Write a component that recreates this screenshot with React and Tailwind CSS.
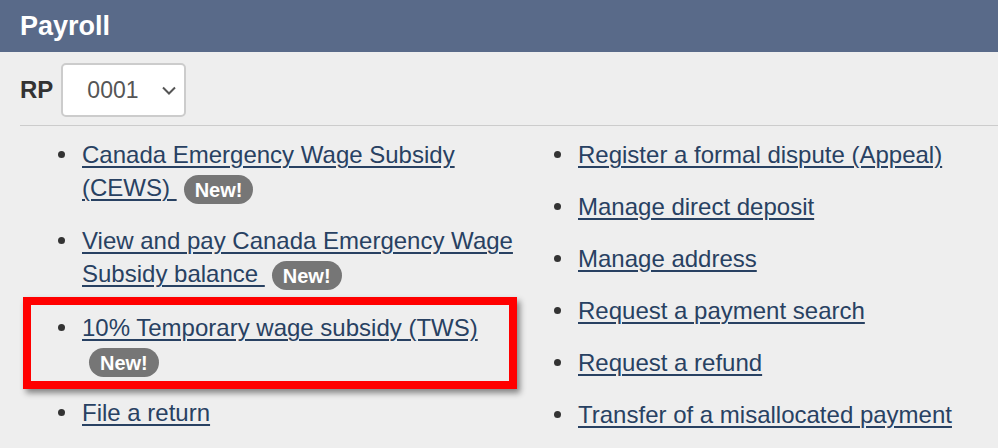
import React from "react";

function Badge({ first }) {
  return (
    <span
      className={`inline-flex h-[29px] items-center rounded-full bg-[#767676] px-[11px] align-middle text-[20px] font-bold leading-none text-white ${first ? "" : "ml-[7px]"}`}
    >
      New!
    </span>
  );
}

function Item({ children, className = "" }) {
  return (
    <li className={`flex ${className}`}>
      <span className="mt-[13px] mr-[17px] h-[7px] w-[7px] shrink-0 rounded-full bg-[#333]" />
      <div className="min-w-0 flex-1">{children}</div>
    </li>
  );
}

const L = ({ children }) => (
  <a href="#" className="text-[#284162] underline decoration-[1.5px] underline-offset-[3px]">
    {children}
  </a>
);

export default function App() {
  return (
    <div
      className="h-[448px] w-[998px] overflow-hidden bg-[#eeeeee] text-[#333]"
      style={{ fontFamily: '"Liberation Sans", Arial, sans-serif' }}
    >
      <div className="h-[52px] bg-[#596a89] px-5 pt-[6px]">
        <h1 className="text-[27px] font-bold leading-[40px] text-white">Payroll</h1>
      </div>
      <div className="pl-5">
        <div className="mt-[11px] flex items-center">
          <span className="text-[24px] font-bold leading-none">RP</span>
          <div className="ml-[8px] flex h-[54px] w-[125px] items-center rounded-[5px] border-2 border-[#cccccc] bg-white pl-[24px] pr-[6px]">
            <span className="flex-1 text-[23px] text-[#555]">0001</span>
            <svg width="14" height="9" viewBox="0 0 14 9" className="mr-[2px]">
              <path d="M1 1.5 L7 7.5 L13 1.5" fill="none" stroke="#555" strokeWidth="2" />
            </svg>
          </div>
        </div>
        <div className="mt-[8px] h-px bg-[#cccccc]" />
        <div className="mt-[12px] flex text-[24px] leading-[33px]">
          <ul className="w-[496px] shrink-0 pl-[38px]">
            <Item className="mb-[20px]">
              <L>Canada Emergency Wage Subsidy (CEWS) </L>
              <Badge />
            </Item>
            <Item className="mb-[21px]">
              <L>View and pay Canada Emergency Wage Subsidy balance </L>
              <Badge />
            </Item>
            <Item className="relative mb-[19px]">
              <L>10% Temporary wage subsidy (TWS) </L>
              <Badge />
              <div className="pointer-events-none absolute left-[-35px] top-[-14px] h-[92px] w-[494px] border-[8px] border-[#ff0000] shadow-[3px_4px_6px_rgba(0,0,0,0.45)]" />
            </Item>
            <Item>
              <L>File a return</L>
            </Item>
          </ul>
          <ul className="flex flex-col gap-[19px] pl-[38px]">
            <Item><L>Register a formal dispute (Appeal)</L></Item>
            <Item><L>Manage direct deposit</L></Item>
            <Item><L>Manage address</L></Item>
            <Item><L>Request a payment search</L></Item>
            <Item><L>Request a refund</L></Item>
            <Item><L>Transfer of a misallocated payment</L></Item>
          </ul>
        </div>
      </div>
    </div>
  );
}
